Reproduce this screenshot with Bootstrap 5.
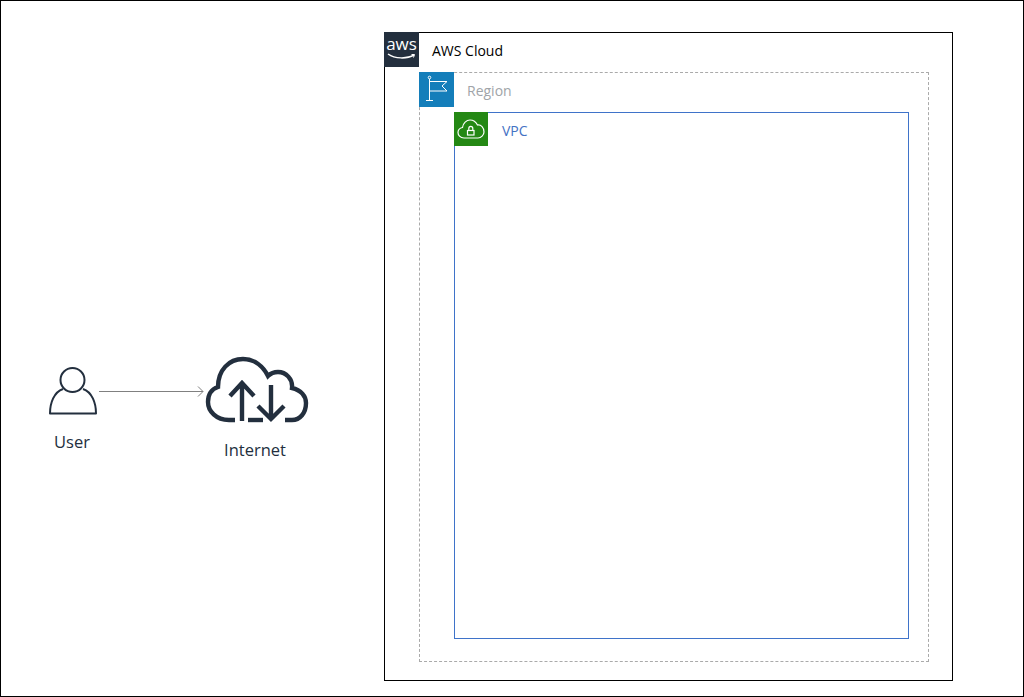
<!DOCTYPE html>
<html lang="en">
<head>
<meta charset="utf-8">
<title>AWS architecture diagram</title>
<link rel="stylesheet" href="https://cdn.jsdelivr.net/npm/bootstrap@5.3.0/dist/css/bootstrap.min.css">
<style>
html,body{margin:0;background:#fff}
.canvas-frame{position:relative;width:1024px;height:697px;border:1px solid #000;overflow:hidden;font-family:"Open Sans","Noto Sans",sans-serif;font-size:14px;background:#fff}
.node-abs{position:absolute}
.node-user{left:47px;top:366px;width:50px}
.node-net{left:204px;top:355px;width:105px}
.label-user{left:21px;top:431px;width:100px;font-size:16.5px;color:#232f3e;line-height:20px}
.label-net{left:204px;top:439px;width:100px;font-size:16.5px;color:#232f3e;line-height:20px}
.link-arrow{left:97px;top:383px;width:108px;height:14px}
.grp{box-sizing:border-box;background:#fff}
.grp-cloud{position:absolute;left:383px;top:31px;width:569px;height:649px;border:1px solid #000;padding:39px 23px 18px 34px}
.grp-region{width:510px;height:590px;border:1px dashed #aaa;padding:39px 19px 22px 34px;position:relative}
.grp-vpc{width:455px;height:527px;border:1px solid #3f73c9;position:relative}
.grp-head{height:35px;gap:13px;margin:-1px 0 0 -1px}
.grp-cloud>.grp-head{position:absolute;left:0;top:0}
.grp-region>.grp-head{position:absolute;left:0;top:0}
.grp-vpc>.grp-head{position:absolute;left:0;top:0;height:34px;gap:14px}
.grp-icon{width:35px;height:35px;flex:none;display:block}
.grp-vpc .grp-icon{width:34px;height:34px}
.grp-title{padding-top:2px}
.ic-aws{background:#232f3e}
.ic-region{background:#147eba}
.ic-vpc{background:#248814}
.title-cloud{color:#000}
.title-region{color:#a0a4a8}
.title-vpc{color:#4472c4}
</style>
</head>
<body>
<div class="canvas-frame">
  <svg class="node-abs node-user" viewBox="0 0 50 50" fill="none" stroke="#232f3e" stroke-width="2">
    <circle cx="24.5" cy="13" r="12"/>
    <path d="M15 22C6 25 2 36 2 46.5h46C48 36 44 25 35 22" stroke-linejoin="round"/>
  </svg>
  <svg class="node-abs link-arrow" viewBox="0 0 108 14" fill="none" stroke="#808080" stroke-width="1">
    <path d="M1 7.5H105"/>
    <path d="M100 2.5L105 7.5L100 12.5"/>
  </svg>
  <svg class="node-abs node-net" viewBox="0 0 105 68" fill="none" stroke="#232f3e" stroke-width="4.4">
    <path d="M30 64H24C11 64 3 55 3 46C3 38 7 33 13 31C13 14 24 3 38 3C49 3 58 10 63 20C66 17 69 16 73 16C81 16 88 23 87 32C96 34 101 40 101 47C101 57 95 64 87 64H80"/>
    <path d="M43 64H58"/>
    <path d="M37 65V27M25 40L37 27L49 40"/>
    <path d="M66 29V64M53 50L66 63L79 50"/>
  </svg>
  <div class="node-abs label-user text-center">User</div>
  <div class="node-abs label-net text-center">Internet</div>

  <section class="grp grp-cloud">
    <div class="grp-head d-flex align-items-center">
      <svg class="grp-icon ic-aws" viewBox="0 0 35 35" fill="none">
        <text x="17.5" y="18" text-anchor="middle" font-family="Open Sans, sans-serif" font-size="17" fill="#fff">aws</text>
        <path d="M4 22C11 27 23 27 30 23" stroke="#fff" stroke-width="1.5"/>
        <path d="M27.5 22.5L30.5 22.5L29.5 25.5" stroke="#fff" stroke-width="1"/>
      </svg>
      <span class="grp-title title-cloud">AWS Cloud</span>
    </div>
    <section class="grp grp-region">
      <div class="grp-head d-flex align-items-center">
        <svg class="grp-icon ic-region" viewBox="0 0 35 35" fill="none" stroke="#fff" stroke-width="1">
          <circle cx="10.5" cy="5.5" r="1.3"/>
          <path d="M10.5 7V28M7 28.5H14M10.5 9.5H28L23 14L28 19H10.5"/>
        </svg>
        <span class="grp-title title-region">Region</span>
      </div>
      <section class="grp grp-vpc">
        <div class="grp-head d-flex align-items-center">
          <svg class="grp-icon ic-vpc" viewBox="0 0 34 34" fill="none" stroke="#fff" stroke-width="1.2">
            <path d="M10 26C6 26 4 23 4 20.500C4 18 6 16 8.500 15.500C9 11 12.500 8 16 8C19.500 8 22 10 23.500 13C27 12.500 30 15.500 30 20C30 23 27 26 24 26Z"/>
            <rect x="13.500" y="18.500" width="6.500" height="4.500"/>
            <path d="M14.800 18.500V16.500C14.800 13.700 18.800 13.700 18.800 16.500V18.500"/>
          </svg>
          <span class="grp-title title-vpc">VPC</span>
        </div>
      </section>
    </section>
  </section>
</div>
<script src="https://cdn.jsdelivr.net/npm/bootstrap@5.3.0/dist/js/bootstrap.bundle.min.js"></script>
</body>
</html>
